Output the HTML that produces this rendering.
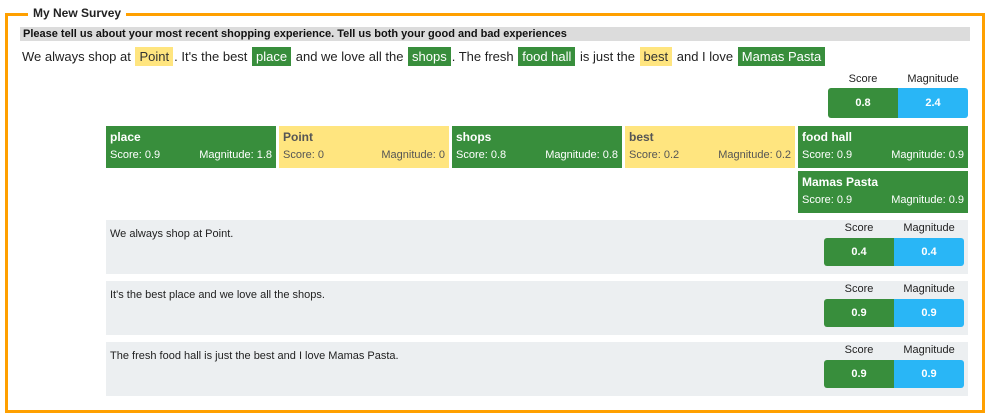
<!DOCTYPE html>
<html><head><style>
*{box-sizing:border-box;margin:0;padding:0}
body{width:991px;height:420px;background:#fff;font-family:"Liberation Sans",Arial,sans-serif;color:#222;position:relative;overflow:hidden}
.a{position:absolute}
.frame{left:5px;top:13px;width:980px;height:400px;border:3px solid #ffa000}
.legend{left:28px;top:6px;background:#fff;padding:0 5px;font-weight:bold;font-size:12px;line-height:15px}
.bar{left:20px;top:27px;width:950px;height:14px;background:#dcdcdc;font-weight:bold;font-size:11px;line-height:14px;padding-left:3px;color:#111}
.sent{left:22px;top:46px;font-size:13px;line-height:20px;white-space:nowrap}
.hl{display:inline-block;padding:0 4px;line-height:19px;border:1px solid #fff}
.g{background:#388e3c;color:#fff}
.y{background:#ffe57f;color:#333}
.lbl{font-size:11px;text-align:center;width:70px}
.box{display:flex;height:30px;border-radius:3px;overflow:hidden;font-weight:bold;font-size:11px;color:#fff}
.box div{width:70px;display:flex;align-items:center;justify-content:center}
.bs{background:#388e3c}.bm{background:#29b6f6}
.card{width:170px;height:42px;padding:4px 4px;font-size:11px}
.card b{display:block;font-size:12px;line-height:15px;margin-bottom:4px}
.card .r{display:flex;justify-content:space-between}
.row{left:106px;width:862px;height:54px;background:#eceff1;font-size:11px;padding:8px 4px}
</style></head><body>
<div class="a frame"></div>
<div class="a legend">My New Survey</div>
<div class="a bar">Please tell us about your most recent shopping experience. Tell us both your good and bad experiences</div>
<div class="a sent">We always shop at <span class="hl y">Point</span>. It's the best <span class="hl g">place</span> and we love all the <span class="hl g">shops</span>. The fresh <span class="hl g">food hall</span> is just the <span class="hl y">best</span> and I love <span class="hl g">Mamas Pasta</span></div>

<div class="a lbl" style="left:828px;top:73px">Score</div>
<div class="a lbl" style="left:898px;top:73px">Magnitude</div>
<div class="a box" style="left:828px;top:88px"><div class="bs">0.8</div><div class="bm">2.4</div></div>

<div class="a card g" style="left:106px;top:126px"><b>place</b><div class="r"><span>Score: 0.9</span><span>Magnitude: 1.8</span></div></div>
<div class="a card y" style="left:279px;top:126px;color:#555"><b>Point</b><div class="r"><span>Score: 0</span><span>Magnitude: 0</span></div></div>
<div class="a card g" style="left:452px;top:126px"><b>shops</b><div class="r"><span>Score: 0.8</span><span>Magnitude: 0.8</span></div></div>
<div class="a card y" style="left:625px;top:126px;color:#555"><b>best</b><div class="r"><span>Score: 0.2</span><span>Magnitude: 0.2</span></div></div>
<div class="a card g" style="left:798px;top:126px"><b>food hall</b><div class="r"><span>Score: 0.9</span><span>Magnitude: 0.9</span></div></div>
<div class="a card g" style="left:798px;top:171px"><b>Mamas Pasta</b><div class="r"><span>Score: 0.9</span><span>Magnitude: 0.9</span></div></div>

<div class="a row" style="top:220px">We always shop at Point.</div>
<div class="a lbl" style="left:824px;top:222px">Score</div><div class="a lbl" style="left:894px;top:222px">Magnitude</div>
<div class="a box" style="left:824px;top:238px;height:28px"><div class="bs">0.4</div><div class="bm">0.4</div></div>

<div class="a row" style="top:281px">It's the best place and we love all the shops.</div>
<div class="a lbl" style="left:824px;top:283px">Score</div><div class="a lbl" style="left:894px;top:283px">Magnitude</div>
<div class="a box" style="left:824px;top:299px;height:28px"><div class="bs">0.9</div><div class="bm">0.9</div></div>

<div class="a row" style="top:342px">The fresh food hall is just the best and I love Mamas Pasta.</div>
<div class="a lbl" style="left:824px;top:344px">Score</div><div class="a lbl" style="left:894px;top:344px">Magnitude</div>
<div class="a box" style="left:824px;top:360px;height:28px"><div class="bs">0.9</div><div class="bm">0.9</div></div>
</body></html>
